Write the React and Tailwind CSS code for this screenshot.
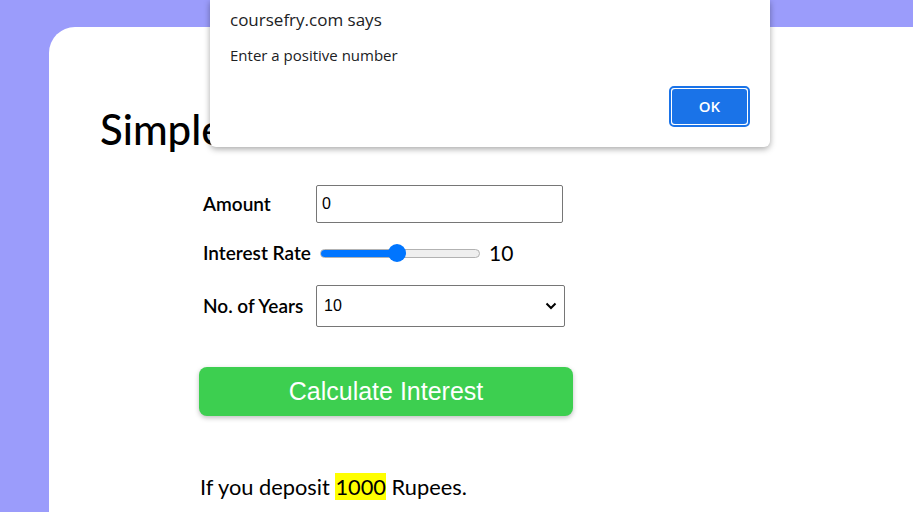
export default function App() {
  return (
    <div className="relative min-h-screen w-[913px] h-[512px] overflow-hidden bg-[#9b9cfb] pl-[49px] pt-[27px]" style={{ fontFamily: "Lato, sans-serif" }}>
      <div className="w-[1000px] h-[600px] bg-white rounded-tl-[26px] pt-[77px] pl-[51px]">
        <h1 className="text-[42px] leading-[50px] text-black whitespace-nowrap font-medium" style={{ fontFamily: "Lato, sans-serif" }}>
          Simple Interest Calculator
        </h1>
        <div className="ml-[103px] mt-[31px] flex flex-col">
          <div className="flex items-center h-[38px]">
            <div className="w-[113px] text-[19px] font-semibold text-black">Amount</div>
            <input
              defaultValue="0"
              className="w-[247px] h-[38px] border border-[#767676] rounded-[2px] px-[5px] text-[16px] text-black outline-none"
              style={{ fontFamily: "Arial, 'Liberation Sans', sans-serif" }}
            />
          </div>
          <div className="flex items-center h-[24px] mt-[18px]">
            <div className="w-[117px] text-[19px] font-semibold text-black whitespace-nowrap">Interest Rate</div>
            <div className="relative w-[160px] h-[18px] flex items-center">
              <div className="w-full h-[9px] rounded-full bg-[#efefef] border border-[#b2b2b2] overflow-hidden">
                <div className="h-full w-[78px] bg-[#0075ff]"></div>
              </div>
              <div className="absolute left-[68px] top-0 w-[18px] h-[18px] rounded-full bg-[#0075ff]"></div>
            </div>
            <div className="ml-[9px] text-[21px] text-black">10</div>
          </div>
          <div className="flex items-center h-[42px] mt-[20px]">
            <div className="w-[113px] text-[19px] font-semibold text-black whitespace-nowrap">No. of Years</div>
            <div
              className="w-[249px] h-[42px] border border-[#767676] rounded-[2px] pl-[7px] pr-[6px] flex items-center justify-between text-[16px] text-black"
              style={{ fontFamily: "Arial, 'Liberation Sans', sans-serif" }}
            >
              <span>10</span>
              <svg width="12" height="8" viewBox="0 0 12 8" className="mr-[1px]">
                <path d="M1.5 1.5 L6 6 L10.5 1.5" fill="none" stroke="#000" strokeWidth="2" />
              </svg>
            </div>
          </div>
          <button
            className="-ml-[4px] mt-[40px] w-[374px] h-[49px] rounded-[8px] bg-[#3dcf50] text-white text-[25px] shadow-[0_2px_5px_rgba(0,0,0,0.25)]"
            style={{ fontFamily: "Arial, 'Liberation Sans', sans-serif" }}
          >
            Calculate Interest
          </button>
          <p className="-ml-[3px] mt-[58px] text-[21.8px] leading-[26px] text-black">
            If you deposit <mark className="bg-[#ffff00] text-black">1000</mark> Rupees.
          </p>
        </div>
      </div>

      <div
        className="absolute left-[210px] top-0 w-[560px] h-[147px] bg-white rounded-b-[6px] shadow-[0_2px_6px_rgba(0,0,0,0.35)] pl-[20px]"
        style={{ fontFamily: "'Open Sans', sans-serif" }}
      >
        <div className="pt-[7px] text-[17px] leading-[26px] text-[#202124]">coursefry.com says</div>
        <div className="mt-[12px] text-[15px] leading-[20px] text-[#202124]">Enter a positive number</div>
        <div className="absolute right-[20px] top-[86px] w-[81px] h-[41px] rounded-[5px] border-2 border-[#1a73e8] p-[1px] bg-white">
          <div className="w-full h-full rounded-[3px] bg-[#1a73e8] flex items-center justify-center text-white text-[15px] font-semibold">
            OK
          </div>
        </div>
      </div>
    </div>
  );
}
